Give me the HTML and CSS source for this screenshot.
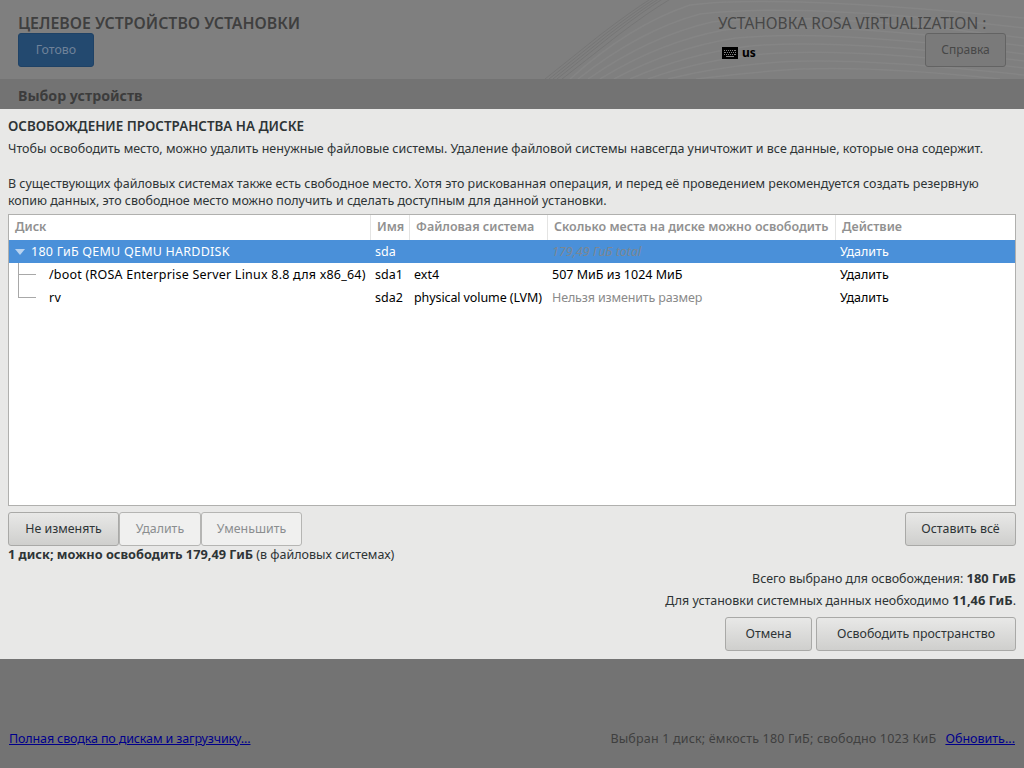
FILE: index.html
```html
<!DOCTYPE html>
<html lang="ru">
<head>
<meta charset="utf-8">
<title>Целевое устройство установки</title>
<link rel="stylesheet" href="styles.css">
</head>
<body>
<header class="top">
  <svg class="waves" viewBox="0 0 1024 79" width="1024" height="79" aria-hidden="true">
    <g fill="none" stroke="#767676" stroke-width="1">
      <path d="M545 79L600 35Q630 12 652 -2"/>
      <path d="M549 79L604 35Q634 12 656 -2"/>
      <path d="M553 79L608 35Q638 12 660 -2"/>
      <path d="M557 79L612 35Q642 12 664 -2"/>
      <path d="M562 79L617 36Q647 13 672 -2"/>
    </g>
    <g fill="none" stroke="#858585" stroke-width="1.5">
      <path d="M570 79Q630 25 690 5Q780 -6 1024 18"/>
      <path d="M578 79Q640 30 700 14Q800 2 1024 28"/>
      <path d="M588 79Q650 36 712 22Q810 10 1024 38"/>
      <path d="M600 79Q660 42 724 30Q820 20 1024 46"/>
      <path d="M614 79Q672 48 736 38Q830 29 1024 54"/>
      <path d="M630 79Q686 54 750 46Q840 38 1024 61"/>
      <path d="M648 79Q700 60 764 54Q850 47 1024 68"/>
      <path d="M668 79Q720 66 780 62Q860 57 1024 75"/>
      <path d="M696 79Q750 72 800 69Q880 66 1000 79"/>
    </g>
  </svg>
  <div class="top-left">
    <h1 class="spoke-title">ЦЕЛЕВОЕ УСТРОЙСТВО УСТАНОВКИ</h1>
    <button class="btn-done" type="button">Готово</button>
  </div>
  <div class="top-right">
    <div class="product">УСТАНОВКА ROSA VIRTUALIZATION :</div>
    <div class="top-right-row">
      <div class="layout">
        <svg class="kbd" viewBox="0 0 16 12" width="16" height="12" aria-hidden="true">
          <path fill="#000" fill-rule="evenodd" d="M0 0h16v12H0zM2 3v1h1V3zm2 0v1h1V3zm2 0v1h1V3zm2 0v1h1V3zm2 0v1h1V3zm2 0v1h2V3zM2 5v1h2V5zm3 0v1h1V5zm2 0v1h1V5zm2 0v1h1V5zm2 0v1h1V5zm2 0v1h1V5zM2 7v1h1V7zm2 0v1h1V7zm2 0v1h1V7zm2 0v1h1V7zm2 0v1h1V7zm2 0v1h2V7zM4 9v1h8V9z"/>
        </svg>
        <span>us</span>
      </div>
      <button class="btn-help" type="button">Справка</button>
    </div>
  </div>
</header>
<div class="subbar">Выбор устройств</div>
<main class="dialog">
  <h2 class="dlg-title">ОСВОБОЖДЕНИЕ ПРОСТРАНСТВА НА ДИСКЕ</h2>
  <p class="dlg-p first">Чтобы освободить место, можно удалить ненужные файловые системы. Удаление файловой системы навсегда уничтожит и все данные, которые она содержит.</p>
  <p class="dlg-p second">В существующих файловых системах также есть свободное место. Хотя это рискованная операция, и перед её проведением рекомендуется создать резервную<br>копию данных, это свободное место можно получить и сделать доступным для данной установки.</p>
  <div class="tree">
    <div class="row head">
      <div class="cell">Диск</div>
      <div class="cell">Имя</div>
      <div class="cell">Файловая система</div>
      <div class="cell">Сколько места на диске можно освободить</div>
      <div class="cell">Действие</div>
    </div>
    <div class="row sel">
      <div class="cell name-disk"><span class="arrow"></span>180 ГиБ QEMU QEMU HARDDISK</div>
      <div class="cell">sda</div>
      <div class="cell"></div>
      <div class="cell dim-sel">179,49 ГиБ total</div>
      <div class="cell">Удалить</div>
    </div>
    <div class="row">
      <div class="cell name-child"><span class="branch tee"></span>/boot (ROSA Enterprise Server Linux 8.8 для x86_64)</div>
      <div class="cell">sda1</div>
      <div class="cell">ext4</div>
      <div class="cell">507 МиБ из 1024 МиБ</div>
      <div class="cell">Удалить</div>
    </div>
    <div class="row">
      <div class="cell name-child"><span class="branch end"></span>rv</div>
      <div class="cell">sda2</div>
      <div class="cell narrow">physical volume (LVM)</div>
      <div class="cell dim">Нельзя изменить размер</div>
      <div class="cell">Удалить</div>
    </div>
  </div>
  <div class="actions">
    <div class="linked">
      <button class="btn" type="button">Не изменять</button>
      <button class="btn off" type="button">Удалить</button>
      <button class="btn off w2" type="button">Уменьшить</button>
    </div>
    <button class="btn keep" type="button">Оставить всё</button>
  </div>
  <div class="summary"><b>1 диск; можно освободить 179,49 ГиБ</b> (в файловых системах)</div>
  <div class="total">Всего выбрано для освобождения: <b>180 ГиБ</b></div>
  <div class="total need">Для установки системных данных необходимо <b>11,46 ГиБ</b>.</div>
  <div class="final">
    <button class="btn cancel" type="button">Отмена</button>
    <button class="btn free" type="button">Освободить пространство</button>
  </div>
</main>
<footer class="bottom">
  <a href="#" class="link full">Полная сводка по дискам и загрузчику...</a>
  <div class="status"><span class="status-text">Выбран 1 диск; ёмкость 180 ГиБ; свободно 1023 КиБ</span><a href="#" class="link">Обновить...</a></div>
</footer>
</body>
</html>
```

FILE: styles.css
```css
* { box-sizing: border-box; }
html, body { margin: 0; height: 100%; }
body {
  width: 1024px;
  height: 768px;
  overflow: hidden;
  display: flex;
  flex-direction: column;
  font-family: "Noto Sans", sans-serif;
  font-size: 13px;
  color: #2e3436;
  background: #737373;
}
button { font-family: inherit; font-size: 12.4px; margin: 0; padding: 0 0 2px; }

.top {
  position: relative;
  height: 79px;
  flex: none;
  background: #7f7f7f;
  display: flex;
  justify-content: space-between;
  overflow: hidden;
}
.waves { position: absolute; left: 0; top: 0; }
.top-left { position: relative; padding: 13px 0 0 18px; }
.spoke-title {
  margin: 0;
  font-size: 15.9px;
  line-height: 20px;
  font-weight: 600;
  color: #3f3f3f;
}
.btn-done {
  display: block;
  width: 76px;
  height: 34px;
  background: #23496f;
  border: 1px solid #1f4266;
  border-radius: 3px;
  color: #6f8299;
}
.top-right { position: relative; width: 306px; padding-top: 13px; }
.product {
  font-size: 15.5px;
  line-height: 20px;
  color: #474747;
  white-space: nowrap;
  width: 268px;
  overflow: hidden;
}
.top-right-row { display: flex; justify-content: space-between; padding-right: 18px; }
.layout {
  display: flex;
  align-items: center;
  gap: 4px;
  padding: 9px 0 0 4px;
  height: 30px;
  font-size: 12px;
  font-weight: 700;
  color: #000;
}
.btn-help {
  width: 81px;
  height: 34px;
  background: #7a7a7a;
  border: 1px solid #636363;
  border-radius: 3px;
  color: #474747;
  font-size: 12px;
}

.subbar {
  height: 30px;
  flex: none;
  background: #737373;
  padding: 7px 0 0 18px;
  font-size: 14.2px;
  line-height: 20px;
  font-weight: 700;
  color: #3c3c3c;
}

.dialog {
  height: 550px;
  flex: none;
  background: #e8e8e7;
  padding: 8px 8px 0;
}
.dlg-title { margin: 0; font-size: 13.4px; line-height: 18px; font-weight: 600; color: #2e3436; }
.dlg-p { margin: 0; font-size: 12.48px; color: #2e3436; white-space: nowrap; }
.dlg-p.first { margin-top: 6px; line-height: 16px; font-size: 12.49px; }
.dlg-p.second { margin-top: 18px; line-height: 17px; }

.tree {
  margin-top: 5px;
  height: 292px;
  background: #fff;
  border: 1px solid #b0b0ae;
  font-size: 12.5px;
  color: #000;
}
.row {
  display: grid;
  grid-template-columns: 361px 39px 138px 288px 1fr;
  height: 23px;
  align-items: center;
  white-space: nowrap;
}
.row .cell { padding-left: 5px; line-height: 23px; overflow: hidden; }
.row.head { grid-template-columns: 362px 39px 138px 288px 1fr; height: 25px; color: #919191; font-weight: 600; }
.row.head .cell { padding-left: 6px; height: 25px; line-height: 24px; border-right: 1px solid #e4e4e3; }
.row.head .cell:last-child { border-right: 0; }
.row.sel { background: #4a90d9; color: #fff; }
.dim { color: #8a8a8a; letter-spacing: -.14px; }
.narrow { letter-spacing: -.1px; }
.dim-sel { color: #7c8792; font-style: italic; }
.name-disk { display: flex; align-items: center; letter-spacing: .24px; }
.arrow {
  width: 0; height: 0;
  margin: 0 6px 0 1px;
  border: 5px solid transparent;
  border-top: 6px solid #b9d3ef;
  border-bottom: 0;
}
.row .name-child { position: relative; padding-left: 40px; overflow: visible; height: 23px; letter-spacing: .22px; }
.branch { position: absolute; left: 9px; width: 18px; border-left: 1px solid #a8a8a8; border-bottom: 1px solid #a8a8a8; }
.branch.tee { top: 0; height: 12px; }
.branch.tee::after { content: ""; position: absolute; left: -1px; top: 12px; height: 11px; border-left: 1px solid #a8a8a8; }
.branch.end { top: 0; height: 12px; }

.btn {
  height: 34px;
  border: 1px solid #a9a9a7;
  border-radius: 3px;
  background: linear-gradient(#e8e8e7, #cfcfcd);
  color: #2e3436;
}
.btn.off { background: #f0f0ef; border-color: #b5b5b3; color: #8b8e8f; width: 82px; }
.btn.off.w2 { width: 101px; }
.actions { display: flex; justify-content: space-between; margin-top: 6px; }
.linked { display: flex; }
.linked .btn:first-child { width: 111px; }
.keep { width: 111px; }
.summary { font-size: 12.5px; line-height: 18px; }
.summary b { font-size: 12.78px; font-weight: 700; line-height: 0; }
.total b { font-size: 12.9px; font-weight: 700; line-height: 0; }
.total { font-size: 12.45px; line-height: 18px; text-align: right; margin-top: 6px; }
.total.need { margin-top: 4px; }
.final { display: flex; justify-content: flex-end; gap: 4px; margin-top: 7px; }
.cancel { width: 87px; }
.free { width: 200px; }

.bottom {
  flex: 1;
  display: flex;
  justify-content: space-between;
  align-items: flex-start;
  padding: 71px 9px 0;
  font-size: 12.5px;
  line-height: 18px;
  color: #3f3f3f;
}
.link { color: #00008c; text-decoration: underline; }
.full { letter-spacing: -.13px; }
.status { display: flex; gap: 9px; }
.status-text { letter-spacing: .18px; }
```
